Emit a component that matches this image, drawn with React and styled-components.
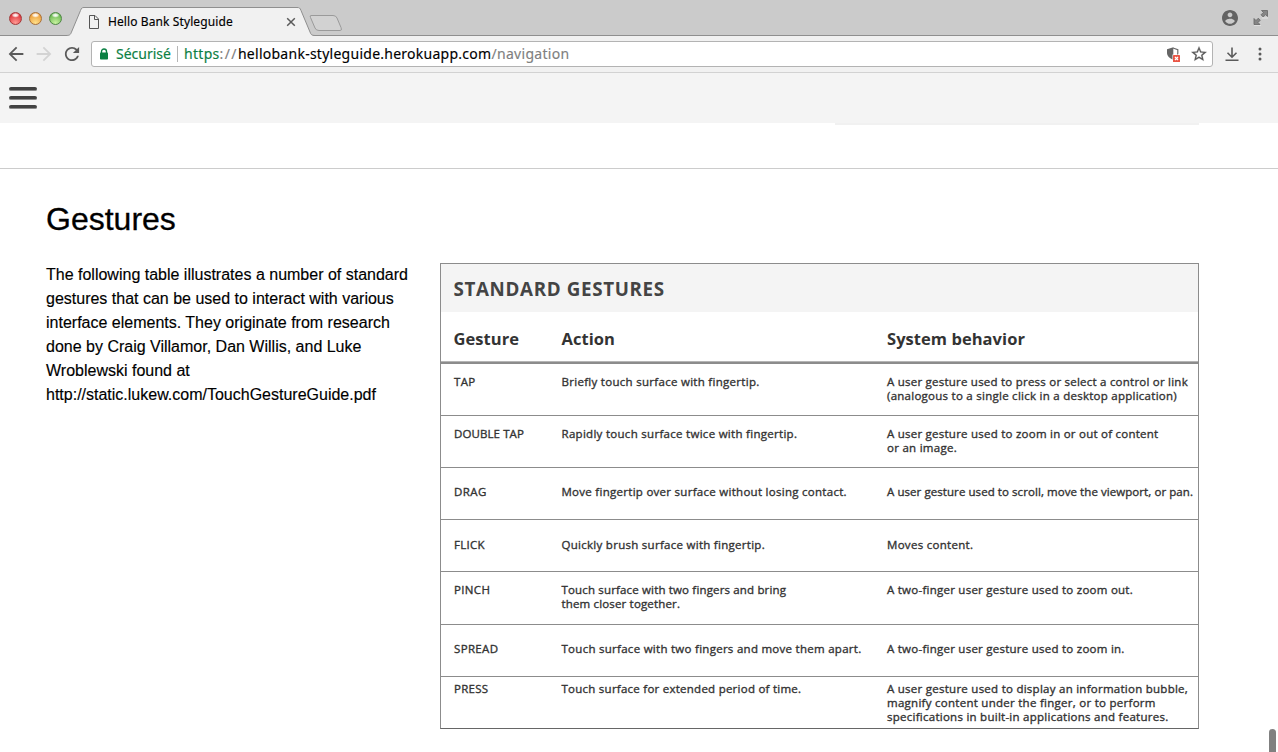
import React from "react";
import styled, { createGlobalStyle } from "styled-components";

const GlobalStyle = createGlobalStyle`
  * { box-sizing: border-box; }
  html, body { margin: 0; padding: 0; background: #fff; overflow: hidden; }
  body { font-family: "Liberation Sans", Arial, sans-serif; color: #000; }
`;

const Window = styled.div`
  position: relative;
  width: 1278px;
  height: 752px;
  display: flex;
  flex-direction: column;
  background: #fff;
  overflow: hidden;
`;

const TabStrip = styled.header`
  position: relative;
  height: 36px;
  flex: none;
  display: flex;
  align-items: center;
  padding: 0 9px;
  background: #cbcbcb;
  border-bottom: 1px solid #8f8f8f;
  font-family: "Noto Sans", sans-serif;
`;

const TabShapes = styled.svg`
  position: absolute;
  left: 66px;
  top: 6px;
`;

const Lights = styled.div`
  display: flex;
  gap: 7px;
  width: 79px;
  margin-top: 1px;
`;

const Light = styled.span`
  width: 13px;
  height: 13px;
  border-radius: 50%;
  border: 1px solid ${(p) => p.$edge};
  background: radial-gradient(ellipse 4px 2.5px at 50% 20%, #fff 0, rgba(255, 255, 255, 0.75) 50%, transparent 100%),
    radial-gradient(circle at 50% 90%, ${(p) => p.$glow} 0, ${(p) => p.$fill} 75%);
`;

const Tab = styled.div`
  position: relative;
  width: 208px;
  height: 28px;
  margin-top: 8px;
  display: flex;
  align-items: center;
`;

const TabTitle = styled.span`
  flex: 1;
  margin-left: 8px;
  font-size: 12px;
  line-height: 16px;
  white-space: nowrap;
  letter-spacing: ${(p) => p.$track}px;
  -webkit-text-stroke: 0.15px currentColor;
`;

const StripActions = styled.div`
  margin-left: auto;
  display: flex;
  gap: 15px;
`;

const Toolbar = styled.div`
  height: 37px;
  flex: none;
  display: flex;
  align-items: center;
  padding: 0 9px 0 8px;
  background: #f1f1f1;
  border-bottom: 1px solid #d2d2d2;
`;

const NavButtons = styled.div`
  display: flex;
  gap: 12px;
  width: 83px;
`;

const AddressBar = styled.div`
  width: 1122px;
  height: 26px;
  display: flex;
  align-items: center;
  padding: 0 5px 0 7px;
  background: #fff;
  border: 1px solid #b3b3b3;
  border-radius: 3px;
  font-family: "Noto Sans", sans-serif;
  font-size: 14px;
  line-height: 20px;
  white-space: nowrap;
  -webkit-text-stroke: 0.15px currentColor;
`;

const Secure = styled.span`
  width: 62px;
  margin-left: 7px;
  margin-right: -1px;
  color: #0b8043;
  letter-spacing: ${(p) => p.$track}px;
`;

const Divider = styled.span`
  width: 1px;
  height: 16px;
  margin-right: 6px;
  background: #b5b5b5;
`;

const UrlPart = styled.span`
  color: ${(p) => p.$color};
  letter-spacing: ${(p) => p.$track}px;
`;

const BarActions = styled.div`
  margin-left: auto;
  display: flex;
  align-items: center;
  gap: 9px;
`;

const ToolbarActions = styled.div`
  margin-left: 12px;
  display: flex;
  gap: 13px;
`;

const PageHeader = styled.div`
  height: 50px;
  flex: none;
  display: flex;
  align-items: center;
  padding-left: 9px;
  background: #f4f4f4;
`;

const Menu = styled.div`
  display: flex;
  flex-direction: column;
  gap: 5px;
`;

const MenuBar = styled.span`
  width: 28px;
  height: 4px;
  border-radius: 2px;
  background: #424242;
  border-bottom: 1px solid #8b8b8b;
`;

const PreviousSection = styled.div`
  height: 46px;
  flex: none;
  padding-left: 835px;
  border-bottom: 1px solid #ccc;
`;

const PreviousEdge = styled.div`
  width: 364px;
  height: 2px;
  background: #f1f1f1;
`;

const Section = styled.main`
  padding: 30px 0 0 46px;
`;

const Heading = styled.h1`
  margin: 0;
  font-size: 32px;
  line-height: 40px;
  font-weight: 400;
  -webkit-text-stroke: 0.3px currentColor;
`;

const Columns = styled.div`
  display: flex;
  margin-top: 24px;
`;

const Intro = styled.p`
  width: 394px;
  margin: 0;
  flex: none;
  font-size: 16px;
  line-height: 24px;
  white-space: nowrap;
  -webkit-text-stroke: 0.15px currentColor;
`;

const Table = styled.div`
  width: 759px;
  border: 1px solid #8c8c8c;
  border-bottom-color: #666;
  font-family: "Open Sans", sans-serif;
  color: #333;
`;

const TableTitle = styled.div`
  height: 48px;
  padding-left: 12.5px;
  background: #f4f4f4;
  color: #444;
  font-size: 18.8px;
  line-height: 50px;
  font-weight: 700;
  letter-spacing: ${(p) => p.$track}px;
`;

const HeadRow = styled.div`
  display: grid;
  grid-template-columns: 120.5px 325.5px 1fr;
  height: 52px;
  padding-left: 0;
  border-bottom: 2px solid #8c8c8c;
  box-shadow: inset 0 -1px 0 #b5b5b5;
`;

const HeadCell = styled.div`
  font-size: 16.5px;
  line-height: 54px;
  font-weight: 700;
  letter-spacing: ${(p) => p.$track}px;
  white-space: nowrap;
  &:first-child { padding-left: 12.5px; }
`;

const Row = styled.div`
  display: grid;
  grid-template-columns: 120.5px 325.5px 1fr;
  height: ${(p) => p.$height}px;
  padding-top: ${(p) => p.$top}px;
  border-bottom: 1px solid #8c8c8c;
  &:last-child { border-bottom: 0; }
`;

const Cell = styled.div`
  font-size: 11.5px;
  line-height: 14.2px;
  font-weight: 400;
  -webkit-text-stroke: 0.35px currentColor;
  white-space: nowrap;
  &:first-child { padding-left: 13px; }
`;

const Line = styled.div`
  letter-spacing: ${(p) => p.$track}px;
`;

const ScrollThumb = styled.div`
  position: absolute;
  left: 1269px;
  top: 729px;
  width: 7px;
  height: 40px;
  border-radius: 4px;
  background: #808080;
`;

const rows = [
  { top: 11, height: 52, cells: [[["TAP", 0.3]], [["Briefly touch surface with fingertip.", 0.29]], [["A user gesture used to press or select a control or link", 0.23], ["(analogous to a single click in a desktop application)", 0.26]]] },
  { top: 11, height: 52, cells: [[["DOUBLE TAP", 0.1]], [["Rapidly touch surface twice with fingertip.", 0.29]], [["A user gesture used to zoom in or out of content", 0.24], ["or an image.", 0.27]]] },
  { top: 17, height: 52, cells: [[["DRAG", 0.4]], [["Move fingertip over surface without losing contact.", 0.28]], [["A user gesture used to scroll, move the viewport, or pan.", 0.07]]] },
  { top: 18, height: 52, cells: [[["FLICK", 0.3]], [["Quickly brush surface with fingertip.", 0.28]], [["Moves content.", 0.3]]] },
  { top: 11, height: 53, cells: [[["PINCH", 0.35]], [["Touch surface with two fingers and bring", 0.16], ["them closer together.", 0.16]], [["A two-finger user gesture used to zoom out.", 0.25]]] },
  { top: 17, height: 52, cells: [[["SPREAD", 0.35]], [["Touch surface with two fingers and move them apart.", 0.275]], [["A two-finger user gesture used to zoom in.", 0.25]]] },
  { top: 5, height: 51, cells: [[["PRESS", 0.27]], [["Touch surface for extended period of time.", 0.25]], [["A user gesture used to display an information bubble,", 0.26], ["magnify content under the finger, or to perform", 0.27], ["specifications in built-in applications and features.", 0.26]]] },
];

const TabOutline = () => (
  <TabShapes width="280" height="30" viewBox="0 0 280 30">
    <path d="M0 29.5 C4 29.5 4.500 28.500 5.500 26 L14.500 4.500 C15.500 2 16 1.500 18 1.500 H231 C233.500 1.500 234 2 235 4.500 L244 26 C245 28.500 245.500 29.500 249 29.500 V30 H0Z" fill="#f1f1f1" />
    <path d="M0 29.5 C4 29.5 4.500 28.500 5.500 26 L14.500 4.500 C15.500 2 16 1.500 18 1.500 H231 C233.500 1.500 234 2 235 4.500 L244 26 C245 28.500 245.500 29.500 249 29.500" fill="none" stroke="#8f8f8f" />
    <path d="M245 9.500 H267 Q270 9.500 271 12 L275 21.500 Q276.500 24.500 274 24.500 H253 Q250 24.500 249 22 L244.500 11.500 Q243.500 9.500 245 9.500Z" fill="#d2d2d2" stroke="#9a9a9a" />
  </TabShapes>
);

const PageIcon = () => (
  <svg width="12" height="16" viewBox="0 0 12 16" fill="none" stroke="#555">
    <path d="M1.500 1.500 H7 L10.500 5 V14.500 H1.500Z M6.500 1.500 V5.500 H10.500" />
  </svg>
);

const CloseIcon = () => (
  <svg width="10" height="10" viewBox="0 0 10 10" stroke="#5a5a5a" strokeWidth="1.500">
    <path d="M1.200 1.200 L8.800 8.800 M8.800 1.200 L1.200 8.800" />
  </svg>
);

const UserIcon = () => (
  <svg width="16" height="16" viewBox="2 2 20 20" fill="#636363">
    <path d="M12 2C6.480 2 2 6.480 2 12s4.480 10 10 10 10-4.480 10-10S17.520 2 12 2zm0 3c1.660 0 3 1.340 3 3s-1.340 3-3 3-3-1.340-3-3 1.340-3 3-3zm0 14.200c-2.500 0-4.710-1.280-6-3.220.030-1.990 4-3.080 6-3.080 1.990 0 5.970 1.090 6 3.080-1.290 1.940-3.500 3.220-6 3.220z" />
  </svg>
);

const ExpandIcon = () => (
  <svg width="16" height="16" viewBox="0 1 16 16">
    <path d="M1 16.200 H8 M9 9 H15" stroke="#e6e6e6" />
    <path d="M8.500 1.500 H14.500 V7.500 L12.600 5.600 L10.200 8 L8 5.800 L10.400 3.400Z M1 9.500 L3 11.500 L5.300 9.200 L7.300 11.200 L5 13.500 L7 15.500 H1Z" fill="#858585" stroke="#666" strokeWidth=".8" />
  </svg>
);

const NavIcon = ({ flip, color }) => (
  <svg width="16" height="16" viewBox="3.300 3.300 17.400 17.400" fill={color}>
    <path
      transform={flip ? "translate(24 0) scale(-1 1)" : undefined}
      d="M20 11H7.830l5.590-5.590L12 4l-8 8 8 8 1.410-1.410L7.830 13H20v-2z"
    />
  </svg>
);

const ReloadIcon = () => (
  <svg width="16" height="16" viewBox="3 3 18 18" fill="#5a5a5a">
    <path d="M17.650 6.350C16.200 4.900 14.210 4 12 4c-4.420 0-7.990 3.580-7.990 8s3.570 8 7.990 8c3.730 0 6.840-2.550 7.730-6h-2.080c-.820 2.330-3.040 4-5.650 4-3.310 0-6-2.690-6-6s2.690-6 6-6c1.660 0 3.140.690 4.220 1.780L13 11h7V4l-2.350 2.350z" />
  </svg>
);

const LockIcon = () => (
  <svg width="10" height="12" viewBox="0 0 10 12">
    <path d="M2.500 5.500 V3.500 A2.500 2.500 0 0 1 7.500 3.500 V5.500" fill="none" stroke="#0b8043" strokeWidth="1.400" />
    <rect x="1" y="4.500" width="8" height="7" rx=".8" fill="#0b8043" />
  </svg>
);

const ShieldIcon = () => (
  <svg width="16" height="16" viewBox="0 0 16 16">
    <path d="M7 2 L11.800 3.700 V7 C11.800 10 10 12.200 7 13.200" fill="#fff" stroke="#6a6a6a" strokeWidth="1.200" />
    <path d="M7.300 1.200 V13.800 C3.500 12.500 1 10 1 6.800 V3.200Z" fill="#666" />
    <rect x="6.500" y="8.500" width="8" height="7.500" fill="#fff" />
    <rect x="7" y="9" width="7" height="7" rx=".6" fill="#ea5545" />
    <path d="M9 11 L12 14 M12 11 L9 14" stroke="#fff" strokeWidth="1.200" />
  </svg>
);

const StarIcon = () => (
  <svg width="16" height="16" viewBox="1.500 1.500 21 21" fill="#5a5a5a" stroke="#5a5a5a" strokeWidth=".3">
    <path d="M22 9.240l-7.190-.620L12 2 9.190 8.630 2 9.240l5.460 4.730L5.820 21 12 17.270 18.180 21l-1.630-7.030L22 9.240zM12 15.400l-3.760 2.270 1-4.280-3.320-2.880 4.380-.380L12 6.100l1.710 4.040 4.380.380-3.320 2.880 1 4.280L12 15.400z" />
  </svg>
);

const DownloadIcon = () => (
  <svg width="14" height="16" viewBox="0 0 14 16" fill="none" stroke="#5a5a5a" strokeWidth="1.600">
    <path d="M7 1.500 V11 M2.500 6.700 L7 11.200 L11.500 6.700 M.5 14.200 H13.500" />
  </svg>
);

const MoreIcon = () => (
  <svg width="16" height="16" viewBox="0 0 16 16" fill="#5a5a5a">
    <circle cx="8" cy="3" r="1.500" />
    <circle cx="8" cy="8" r="1.500" />
    <circle cx="8" cy="13" r="1.500" />
  </svg>
);

export default function App() {
  return (
    <>
      <GlobalStyle />
      <Window>
        <TabStrip>
          <TabOutline />
          <Lights>
            <Light $edge="#a33a3a" $fill="#e0383e" $glow="#ff9a94" />
            <Light $edge="#a8703a" $fill="#eda03c" $glow="#ffe08a" />
            <Light $edge="#4f8745" $fill="#6dbb54" $glow="#c8f2a0" />
          </Lights>
          <Tab>
            <PageIcon />
            <TabTitle $track={0.1}>Hello Bank Styleguide</TabTitle>
            <CloseIcon />
          </Tab>
          <StripActions>
            <UserIcon />
            <ExpandIcon />
          </StripActions>
        </TabStrip>
        <Toolbar>
          <NavButtons>
            <NavIcon color="#5a5a5a" />
            <NavIcon flip color="#d3d3d3" />
            <ReloadIcon />
          </NavButtons>
          <AddressBar>
            <LockIcon />
            <Secure $track={0}>Sécurisé</Secure>
            <Divider />
            <UrlPart $color="#0b8043" $track={0.3}>https</UrlPart>
            <UrlPart $color="#808080" $track={1.4}>://</UrlPart>
            <UrlPart $color="#000" $track={0.26}>hellobank-styleguide.herokuapp.com</UrlPart>
            <UrlPart $color="#808080" $track={0.3}>/navigation</UrlPart>
            <BarActions>
              <ShieldIcon />
              <StarIcon />
            </BarActions>
          </AddressBar>
          <ToolbarActions>
            <DownloadIcon />
            <MoreIcon />
          </ToolbarActions>
        </Toolbar>
        <PageHeader>
          <Menu>
            <MenuBar />
            <MenuBar />
            <MenuBar />
          </Menu>
        </PageHeader>
        <PreviousSection>
          <PreviousEdge />
        </PreviousSection>
        <Section>
          <Heading>Gestures</Heading>
          <Columns>
            <Intro>
              The following table illustrates a number of standard<br />
              gestures that can be used to interact with various<br />
              interface elements. They originate from research<br />
              done by Craig Villamor, Dan Willis, and Luke<br />
              Wroblewski found at<br />
              http://static.lukew.com/TouchGestureGuide.pdf
            </Intro>
            <Table>
              <TableTitle $track={0.64}>STANDARD GESTURES</TableTitle>
              <HeadRow>
                <HeadCell $track={0.05}>Gesture</HeadCell>
                <HeadCell $track={0.05}>Action</HeadCell>
                <HeadCell $track={0.05}>System behavior</HeadCell>
              </HeadRow>
              {rows.map((row, i) => (
                <Row key={i} $top={row.top} $height={row.height}>
                  {row.cells.map((lines, j) => (
                    <Cell key={j}>
                      {lines.map(([text, track]) => (
                        <Line key={text} $track={track}>{text}</Line>
                      ))}
                    </Cell>
                  ))}
                </Row>
              ))}
            </Table>
          </Columns>
        </Section>
        <ScrollThumb />
      </Window>
    </>
  );
}
